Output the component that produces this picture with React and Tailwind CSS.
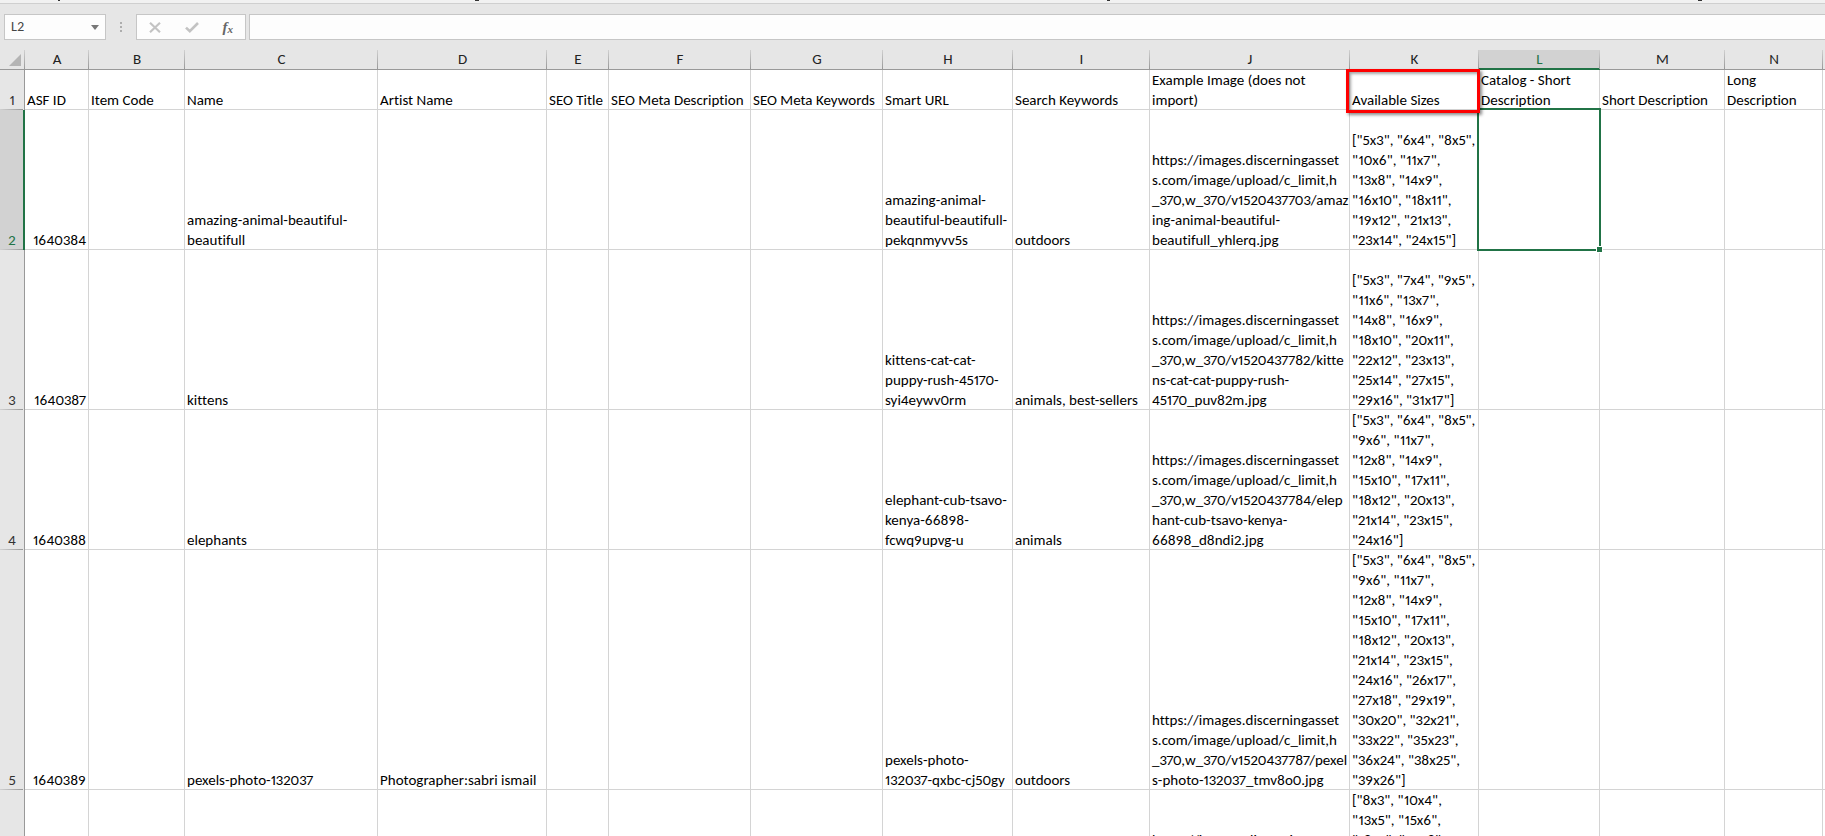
const columns = [
  ['A', 'w-16'],
  ['B', 'w-24'],
  ['C', 'w-[193px]'],
  ['D', 'w-[169px]'],
  ['E', 'w-[62px]'],
  ['F', 'w-[142px]'],
  ['G', 'w-[132px]'],
  ['H', 'w-[130px]'],
  ['I', 'w-[137px]'],
  ['J', 'w-[200px]'],
  ['K', 'w-[129px]'],
  ['L', 'w-[121px]'],
  ['M', 'w-[125px]'],
  ['N', 'w-[98px]'],
];

const rows = [
  {
    n: 1,
    h: 'h-10',
    A: 'ASF ID',
    B: 'Item Code',
    C: 'Name',
    D: 'Artist Name',
    E: 'SEO Title',
    F: 'SEO Meta Description',
    G: 'SEO Meta Keywords',
    H: 'Smart URL',
    I: 'Search Keywords',
    J: 'Example Image (does not\nimport)',
    K: 'Available Sizes',
    L: 'Catalog - Short\nDescription',
    M: 'Short Description',
    N: 'Long\nDescription',
  },
  {
    n: 2,
    h: 'h-[140px]',
    A: '1640384',
    C: 'amazing-animal-beautiful-\nbeautifull',
    H: 'amazing-animal-\nbeautiful-beautifull-\npekqnmyvv5s',
    I: 'outdoors',
    J: 'https://images.discerningasset\ns.com/image/upload/c_limit,h\n_370,w_370/v1520437703/amaz\ning-animal-beautiful-\nbeautifull_yhlerq.jpg',
    K: '["5x3", "6x4", "8x5",\n"10x6", "11x7",\n"13x8", "14x9",\n"16x10", "18x11",\n"19x12", "21x13",\n"23x14", "24x15"]',
  },
  {
    n: 3,
    h: 'h-40',
    A: '1640387',
    C: 'kittens',
    H: 'kittens-cat-cat-\npuppy-rush-45170-\nsyi4eywv0rm',
    I: 'animals, best-sellers',
    J: 'https://images.discerningasset\ns.com/image/upload/c_limit,h\n_370,w_370/v1520437782/kitte\nns-cat-cat-puppy-rush-\n45170_puv82m.jpg',
    K: '["5x3", "7x4", "9x5",\n"11x6", "13x7",\n"14x8", "16x9",\n"18x10", "20x11",\n"22x12", "23x13",\n"25x14", "27x15",\n"29x16", "31x17"]',
  },
  {
    n: 4,
    h: 'h-[140px]',
    A: '1640388',
    C: 'elephants',
    H: 'elephant-cub-tsavo-\nkenya-66898-\nfcwq9upvg-u',
    I: 'animals',
    J: 'https://images.discerningasset\ns.com/image/upload/c_limit,h\n_370,w_370/v1520437784/elep\nhant-cub-tsavo-kenya-\n66898_d8ndi2.jpg',
    K: '["5x3", "6x4", "8x5",\n"9x6", "11x7",\n"12x8", "14x9",\n"15x10", "17x11",\n"18x12", "20x13",\n"21x14", "23x15",\n"24x16"]',
  },
  {
    n: 5,
    h: 'h-60',
    A: '1640389',
    C: 'pexels-photo-132037',
    D: 'Photographer:sabri ismail',
    H: 'pexels-photo-\n132037-qxbc-cj50gy',
    I: 'outdoors',
    J: 'https://images.discerningasset\ns.com/image/upload/c_limit,h\n_370,w_370/v1520437787/pexel\ns-photo-132037_tmv8o0.jpg',
    K: '["5x3", "6x4", "8x5",\n"9x6", "11x7",\n"12x8", "14x9",\n"15x10", "17x11",\n"18x12", "20x13",\n"21x14", "23x15",\n"24x16", "26x17",\n"27x18", "29x19",\n"30x20", "32x21",\n"33x22", "35x23",\n"36x24", "38x25",\n"39x26"]',
  },
  {
    n: 6,
    h: 'h-[60px]',
    J: 'https://images.discerningasset',
    K: '["8x3", "10x4",\n"13x5", "15x6",\n"18x7", "20x8",',
  },
];

const selected = { column: 'L', row: 2 };

function RibbonEdge() {
  return (
    <div className="h-1 border-b border-[#cfcfcf] bg-[#f1f1f1]">
      <svg className="block h-[3px] w-full" aria-hidden="true" fill="#333">
        <rect x="58" y="0" width="2" height="1" />
        <rect x="475" y="0" width="4" height="1" />
        <rect x="1107" y="0" width="3" height="1" />
        <rect x="1698" y="0" width="4" height="1" />
      </svg>
    </div>
  );
}

function FormulaBar() {
  return (
    <div className="flex h-[46px] items-start pt-[10px] pl-1">
      <div className="flex h-[26px] w-[102px] shrink-0 items-center border border-[#c6c6c6] bg-[#fdfdfd]">
        <input
          aria-label="Name box"
          defaultValue="L2"
          className="w-0 grow bg-transparent pl-[6px] text-sm text-[#444] outline-none"
        />
        <button type="button" aria-label="Open name list" className="flex h-full w-5 items-center justify-center">
          <svg width="8" height="5" viewBox="0 0 8 5" fill="#777">
            <path d="M0 0h8L4 5z" />
          </svg>
        </button>
      </div>
      <div className="flex h-[26px] w-[30px] shrink-0 flex-col items-center justify-center gap-[2px]">
        <span className="size-[2px] bg-[#adadad]" />
        <span className="size-[2px] bg-[#adadad]" />
        <span className="size-[2px] bg-[#adadad]" />
      </div>
      <div className="flex h-[26px] w-[110px] shrink-0 items-center border border-[#c6c6c6] bg-[#fdfdfd]">
        <button type="button" aria-label="Cancel" className="flex h-full grow items-center justify-center">
          <svg width="12" height="11" viewBox="0 0 12 11" fill="none" stroke="#c3c3c3" strokeWidth="2.2">
            <path d="M1 .8l10 9.4M11 .8L1 10.2" />
          </svg>
        </button>
        <button type="button" aria-label="Enter" className="flex h-full grow items-center justify-center">
          <svg width="14" height="11" viewBox="0 0 14 11" fill="none" stroke="#c3c3c3" strokeWidth="2.6">
            <path d="M1 5.6l3.8 3.6L13 1" />
          </svg>
        </button>
        <button
          type="button"
          aria-label="Insert function"
          className="flex h-full grow items-center justify-center pb-px font-['Liberation_Serif',serif] text-[15px] leading-4 font-bold text-[#666] italic"
        >
          f<span className="pt-1 text-[11px] leading-3">x</span>
        </button>
      </div>
      <input
        aria-label="Formula"
        className="ml-[3px] h-[26px] w-0 grow border border-r-0 border-[#c6c6c6] bg-[#fdfdfd] px-2 outline-none"
      />
    </div>
  );
}

function ColumnHeader({ name }) {
  const active = name === selected.column;
  return (
    <th
      scope="col"
      className={
        active
          ? 'relative bg-[#d2d2d2] p-0 pb-[2px] text-center leading-[18px] font-normal text-[#217346] shadow-[inset_0_-2px_0_#217346]'
          : 'relative p-0 pb-[2px] text-center leading-[18px] font-normal text-[#222] shadow-[inset_0_-1px_0_#999]'
      }
    >
      {name}
      <span className="absolute top-0 right-0 h-[19px] w-px bg-gradient-to-b from-[#d0d0d0] to-[#999]" />
    </th>
  );
}

function RowHeader({ row }) {
  const active = row.n === selected.row;
  return (
    <th
      scope="row"
      className={
        active
          ? 'relative bg-[#d2d2d2] p-0 pr-px text-center align-bottom font-normal text-[#217346] shadow-[inset_-2px_0_0_#217346]'
          : 'relative bg-[#e6e6e6] p-0 pr-px text-center align-bottom font-normal text-[#333] shadow-[inset_-1px_0_0_#999]'
      }
    >
      {row.n < 6 ? row.n : ''}
      <span className="absolute bottom-0 left-0 h-px w-[23px] bg-gradient-to-r from-[#d0d0d0] to-[#999]" />
    </th>
  );
}

function Cell({ row, name }) {
  const isSelected = name === selected.column && row.n === selected.row;
  const isMarked = name === 'K' && row.n === 1;
  const numeric = name === 'A' && row.n > 1;
  return (
    <td
      className={
        numeric
          ? 'relative p-0 pr-[3px] text-right align-bottom whitespace-pre shadow-[inset_-1px_-1px_0_#d4d4d4]'
          : 'relative p-0 pl-[2px] align-bottom whitespace-pre shadow-[inset_-1px_-1px_0_#d4d4d4]'
      }
    >
      {row[name]}
      {isMarked && (
        <div className="absolute -top-px -right-px -left-1 z-20 h-11 border-3 border-[#fe0000] shadow-[2px_2px_3px_rgba(0,0,0,0.45),inset_2px_2px_3px_rgba(0,0,0,0.35)]" />
      )}
      {isSelected && (
        <div className="absolute -top-[2px] -right-px -bottom-px -left-[2px] z-10 border-2 border-[#217346]">
          <span className="absolute -right-[4px] -bottom-[4px] size-[7px] border border-white bg-[#217346]" />
        </div>
      )}
    </td>
  );
}

export default function App() {
  return (
    <div className="h-screen overflow-hidden bg-[#e6e6e6] font-[Calibri,Carlito,Lato,sans-serif] text-[15px] leading-5 text-black proportional-nums [font-variant-ligatures:none]">
      <RibbonEdge />
      <FormulaBar />
      <table className="w-full table-fixed border-separate border-spacing-0 bg-white">
        <colgroup>
          <col className="w-[25px]" />
          {columns.map(([name, width]) => (
            <col key={name} className={width} />
          ))}
          <col />
        </colgroup>
        <thead>
          <tr className="h-5 bg-[#e6e6e6]">
            <th className="relative p-0 shadow-[inset_0_-1px_0_#999]">
              <button type="button" aria-label="Select all" className="absolute right-1 bottom-1">
                <svg className="block" width="12" height="12" viewBox="0 0 12 12" fill="#b4b4b4">
                  <path d="M12 0v12H0z" />
                </svg>
              </button>
              <span className="absolute top-0 right-0 h-[19px] w-px bg-gradient-to-b from-[#d0d0d0] to-[#999]" />
            </th>
            {columns.map(([name]) => (
              <ColumnHeader key={name} name={name} />
            ))}
            <th className="p-0 shadow-[inset_0_-1px_0_#999]" />
          </tr>
        </thead>
        <tbody>
          {rows.map((row) => (
            <tr key={row.n} className={row.h}>
              <RowHeader row={row} />
              {columns.map(([name]) => (
                <Cell key={name} row={row} name={name} />
              ))}
              <td className="p-0 shadow-[inset_0_-1px_0_#d4d4d4]" />
            </tr>
          ))}
        </tbody>
      </table>
    </div>
  );
}
